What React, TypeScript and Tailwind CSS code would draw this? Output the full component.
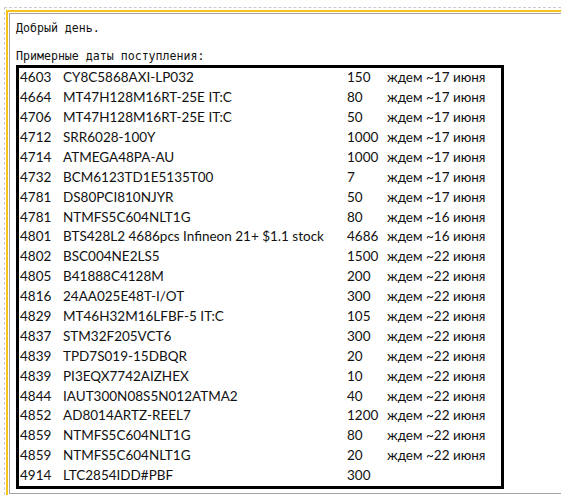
const rows: [string, string, string, string][] = [
  ["4603", "CY8C5868AXI-LP032", "150", "ждем ~17 июня"],
  ["4664", "MT47H128M16RT-25E IT:C", "80", "ждем ~17 июня"],
  ["4706", "MT47H128M16RT-25E IT:C", "50", "ждем ~17 июня"],
  ["4712", "SRR6028-100Y", "1000", "ждем ~17 июня"],
  ["4714", "ATMEGA48PA-AU", "1000", "ждем ~17 июня"],
  ["4732", "BCM6123TD1E5135T00", "7", "ждем ~17 июня"],
  ["4781", "DS80PCI810NJYR", "50", "ждем ~17 июня"],
  ["4781", "NTMFS5C604NLT1G", "80", "ждем ~16 июня"],
  ["4801", "BTS428L2 4686pcs Infineon 21+ $1.1 stock", "4686", "ждем ~16 июня"],
  ["4802", "BSC004NE2LS5", "1500", "ждем ~22 июня"],
  ["4805", "B41888C4128M", "200", "ждем ~22 июня"],
  ["4816", "24AA025E48T-I/OT", "300", "ждем ~22 июня"],
  ["4829", "MT46H32M16LFBF-5 IT:C", "105", "ждем ~22 июня"],
  ["4837", "STM32F205VCT6", "300", "ждем ~22 июня"],
  ["4839", "TPD7S019-15DBQR", "20", "ждем ~22 июня"],
  ["4839", "PI3EQX7742AIZHEX", "10", "ждем ~22 июня"],
  ["4844", "IAUT300N08S5N012ATMA2", "40", "ждем ~22 июня"],
  ["4852", "AD8014ARTZ-REEL7", "1200", "ждем ~22 июня"],
  ["4859", "NTMFS5C604NLT1G", "80", "ждем ~22 июня"],
  ["4859", "NTMFS5C604NLT1G", "20", "ждем ~22 июня"],
  ["4914", "LTC2854IDD#PBF", "300", ""],
];

export default function App() {
  return (
    <div className="w-[561px] h-[495px] overflow-hidden bg-white pl-[4px] pt-[7px]">
      <div className="h-full border-l border-t border-dashed border-[#c9cad8] pl-[1px] pt-[2px]">
        <div className="h-full border-l-2 border-t-2 border-[#f7c21a] pl-[1px] pt-[1px]">
          <div className="h-[481px] border-l border-t border-b border-[#a3a3a3] pl-[6px] pt-[8px]">
            <div className="font-['DejaVu_Sans_Mono',monospace] text-[11.6px] leading-[13.8px] text-[#111]">
              <p>Добрый день.</p>
              <p>&nbsp;</p>
              <p>Примерные даты поступления:</p>
            </div>
            <div className="mt-[2px] w-[488px] border-[3px] border-black font-['Lato',sans-serif] text-[13.5px] text-[#111]">
              {rows.map((r, i) => (
                <div key={i} className="grid grid-cols-[42px_284px_40px_1fr] h-[19.9px] items-center leading-[16px] pb-[2px]">
                  <span className="pl-[1px] whitespace-nowrap">{r[0]}</span>
                  <span className="pl-[2px] whitespace-nowrap">{r[1]}</span>
                  <span className="pl-[2px] whitespace-nowrap">{r[2]}</span>
                  <span className="pl-[2px] whitespace-nowrap">{r[3]}</span>
                </div>
              ))}
            </div>
          </div>
        </div>
      </div>
    </div>
  );
}
